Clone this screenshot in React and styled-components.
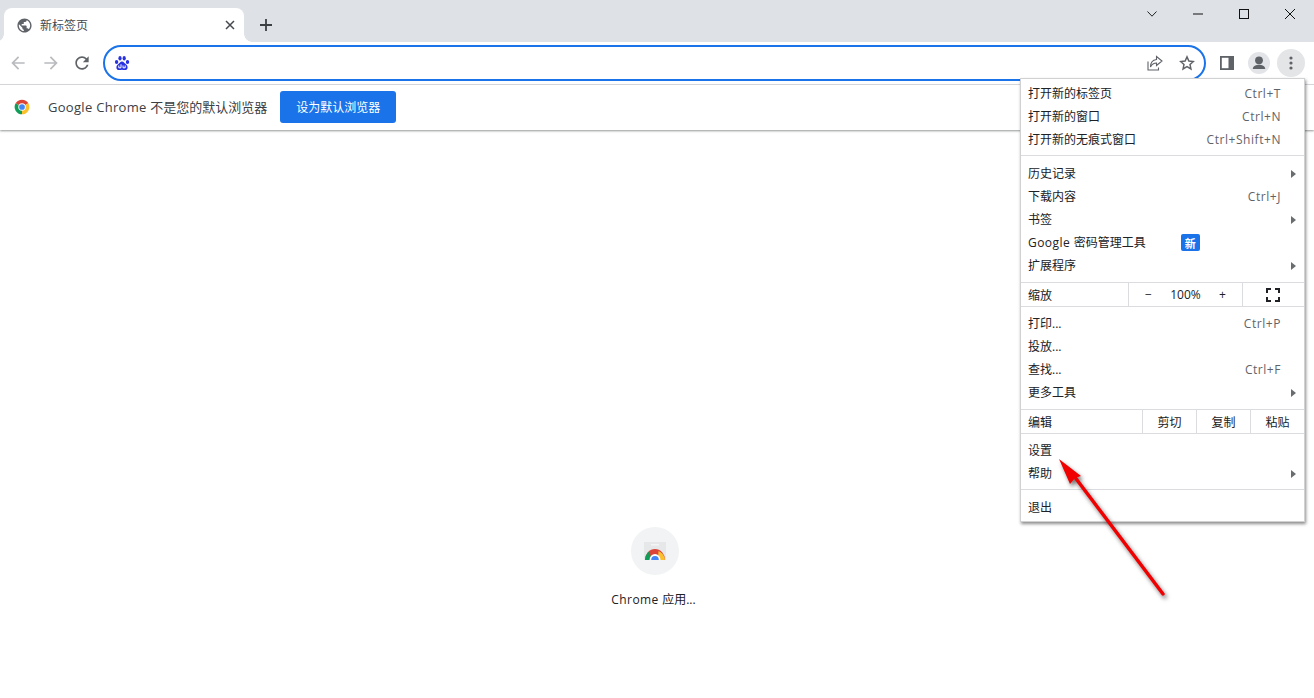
import React from 'react';
import styled, { createGlobalStyle } from 'styled-components';

const GlobalStyle = createGlobalStyle`
  html, body {
    margin: 0;
    padding: 0;
    background: #fff;
    overflow: hidden;
  }
  * { box-sizing: border-box; }
  body {
    font-family: "Open Sans", "Noto Sans CJK SC", sans-serif;
    font-size: 12px;
    color: #202124;
  }
`;

const Page = styled.div`
  position: relative;
  width: 100%;
  height: 100vh;
  display: flex;
  flex-direction: column;
  overflow: hidden;
`;

const TabStrip = styled.div`
  height: 42px;
  background: #dee1e6;
  display: flex;
  align-items: flex-end;
  padding-left: 4px;
`;

const Tab = styled.div`
  position: relative;
  width: 240px;
  height: 34px;
  background: #fff;
  border-radius: 8px 8px 0 0;
  display: flex;
  align-items: center;
  padding: 0 9px 0 12px;
  gap: 7px;
  &::before, &::after {
    content: '';
    position: absolute;
    bottom: 0;
    width: 8px;
    height: 8px;
  }
  &::before {
    left: -8px;
    background: radial-gradient(circle at 0 0, #dee1e6 7.5px, #fff 8px);
  }
  &::after {
    right: -8px;
    background: radial-gradient(circle at 100% 0, #dee1e6 7.5px, #fff 8px);
  }
`;

const TabTitle = styled.span`
  flex: 1;
  color: #45494e;
  font-size: 12px;
`;

const NewTab = styled.div`
  width: 28px;
  height: 28px;
  margin: 0 0 3px 8px;
  display: flex;
  align-items: center;
  justify-content: center;
`;

const WindowControls = styled.div`
  margin-left: auto;
  align-self: flex-start;
  display: flex;
  padding-right: 1px;
`;

const WindowButton = styled.div`
  width: 46px;
  height: 28px;
  display: flex;
  align-items: center;
  justify-content: center;
`;

const Toolbar = styled.div`
  height: 43px;
  background: #fff;
  border-bottom: 1px solid #dadce0;
  display: flex;
  align-items: center;
  padding: 0 9px 0 4px;
`;

const NavButton = styled.div`
  width: ${p => p.$w || 32}px;
  height: 28px;
  display: flex;
  align-items: center;
  justify-content: center;
  flex: none;
`;

const Omnibox = styled.div`
  flex: 1;
  height: 36px;
  margin: 0 4px 0 9px;
  border: 2px solid #1a73e8;
  border-radius: 18px;
  display: flex;
  align-items: center;
  padding: 0 3px 0 9px;
`;

const OmniSpacer = styled.div`
  flex: 1;
`;

const RoundButton = styled.div`
  width: 28px;
  height: 28px;
  margin-left: ${p => p.$gap || 4}px;
  border-radius: 50%;
  background: ${p => (p.$active ? '#e4e5e7' : 'transparent')};
  display: flex;
  align-items: center;
  justify-content: center;
  flex: none;
`;

const InfoBar = styled.div`
  height: 45px;
  background: #fff;
  display: flex;
  align-items: center;
  padding: 0 0 1px 14px;
  box-shadow: 0 1px 2px rgba(60, 64, 67, 0.55);
  position: relative;
`;

const InfoText = styled.span`
  margin: 0 0 2px 18px;
  font-size: 13px;
  color: #3c4043;
`;

const Latin = styled.span`
  letter-spacing: ${p => p.$spacing}px;
`;

const InfoButton = styled.div`
  margin-left: 13px;
  width: 116px;
  height: 32px;
  border-radius: 3px;
  background: #1a73e8;
  color: #fff;
  font-size: 12px;
  display: flex;
  align-items: center;
  justify-content: center;
`;

const Content = styled.div`
  flex: 1;
  display: flex;
  flex-direction: column;
  align-items: center;
  padding-top: 397px;
`;

const Shortcut = styled.div`
  width: 112px;
  margin-left: -4px;
  display: flex;
  flex-direction: column;
  align-items: center;
  gap: 15px;
`;

const ShortcutIcon = styled.div`
  width: 48px;
  height: 48px;
  border-radius: 50%;
  background: #f1f3f4;
  display: flex;
  align-items: center;
  justify-content: center;
`;

const ShortcutLabel = styled.div`
  font-size: 12px;
  color: #202124;
  margin-left: -3px;
`;

const Menu = styled.div`
  position: absolute;
  left: 1020px;
  top: 78px;
  width: 285px;
  height: 444px;
  background: #fff;
  border: 1px solid #d0d1d3;
  padding-top: 3px;
  box-shadow: 1px 2px 3px rgba(0, 0, 0, 0.45);
`;

const Row = styled.div`
  height: 23px;
  display: flex;
  align-items: center;
  padding: 0 8px 0 7px;
`;

const RowLabel = styled.span`
  margin-bottom: 2px;
`;

const Keys = styled.span`
  margin-left: auto;
  padding-right: 15px;
  color: #5f6368;
  font-size: 12px;
  letter-spacing: 0.55px;
`;

const Caret = styled.span`
  margin-left: auto;
  width: 0;
  height: 0;
  border-left: 5px solid #6a6d70;
  border-top: 4px solid transparent;
  border-bottom: 4px solid transparent;
`;

const Badge = styled.span`
  margin-left: 35px;
  width: 19px;
  height: 17px;
  border-radius: 2px;
  background: #1a73e8;
  color: #fff;
  font-size: 11px;
  font-weight: 700;
  display: flex;
  align-items: center;
  justify-content: center;
`;

const Sep = styled.div`
  height: 1px;
  background: #dadce0;
  margin: ${p => p.$above ?? 0}px 0 ${p => p.$below ?? 0}px;
`;

const CellRow = styled.div`
  height: 23px;
  display: flex;
  align-items: stretch;
`;

const CellLabel = styled.div`
  width: ${p => p.$w}px;
  padding-left: 7px;
  display: flex;
  align-items: center;
`;

const Cell = styled.div`
  width: ${p => p.$w}px;
  border-left: 1px solid #dadce0;
  display: flex;
  align-items: center;
  justify-content: ${p => p.$spread ? 'space-between' : 'center'};
  padding: ${p => p.$spread ? '0 16px' : '0'};
`;

const FullscreenCell = styled(Cell)`
  padding-right: 2px;
`;

const ArrowOverlay = styled.svg`
  position: absolute;
  left: 0;
  top: 0;
  width: 100%;
  height: 100%;
  pointer-events: none;
  filter: drop-shadow(2px 3px 2px rgba(0, 0, 0, 0.55));
`;

const Icon = ({ d, fill = '#5f6368', size = 20 }) => (
  <svg width={size} height={size} viewBox="0 0 24 24"><path d={d} fill={fill} /></svg>
);

const ChromeLogo = ({ size = 16 }) => (
  <svg width={size} height={size} viewBox="0 0 24 24">
    <path d="M12 12 L2.47 6.5 A11 11 0 0 1 21.53 6.5 Z" fill="#db4437" />
    <path d="M12 12 L21.53 6.5 A11 11 0 0 1 12 23 Z" fill="#fbc02d" />
    <path d="M12 12 L12 23 A11 11 0 0 1 2.47 6.5 Z" fill="#0f9d58" />
    <circle cx="12" cy="12" r="5.6" fill="#fff" />
    <circle cx="12" cy="12" r="4.3" fill="#4285f4" />
  </svg>
);

const Paw = () => (
  <svg width="16" height="16" viewBox="0 0 16 16">
    <g fill="#2932e1">
      <ellipse cx="2.6" cy="7" rx="1.7" ry="2.1" />
      <ellipse cx="6" cy="3.2" rx="1.6" ry="2.2" />
      <ellipse cx="10.2" cy="3.2" rx="1.6" ry="2.2" />
      <ellipse cx="13.5" cy="7" rx="1.7" ry="2.1" />
      <path d="M8 6.4c1.8 0 2.4 1.6 3.6 2.7 1.3 1.1 2 2 2 3.3 0 1.8-1.5 2.9-3 2.7-1-.1-1.7-.4-2.6-.4s-1.6.3-2.6.4c-1.6.2-3-.9-3-2.7 0-1.3.7-2.2 2-3.3C5.600 8 6.200 6.400 8 6.400z" />
    </g>
    <path d="M4.800 10.500v2.300h2.200v-3.500M9 10.500v2.300h2.200v-2.300" fill="none" stroke="#fff" strokeWidth="1" />
  </svg>
);

const back = 'M20 11H7.830l5.590-5.590L12 4l-8 8 8 8 1.410-1.410L7.830 13H20v-2z';
const forward = 'M4 11h12.170l-5.590-5.590L12 4l8 8-8 8-1.410-1.410L16.170 13H4v-2z';
const reload = 'M17.650 6.350C16.200 4.900 14.210 4 12 4c-4.420 0-7.990 3.580-7.990 8s3.570 8 7.990 8c3.730 0 6.840-2.550 7.730-6h-2.080c-.82 2.330-3.040 4-5.650 4-3.310 0-6-2.690-6-6s2.690-6 6-6c1.660 0 3.140.69 4.220 1.780L13 11h7V4l-2.350 2.350z';
const globe = 'M12 2C6.480 2 2 6.480 2 12s4.480 10 10 10 10-4.480 10-10S17.520 2 12 2zm-1 17.930c-3.950-.49-7-3.850-7-7.930 0-.62.08-1.210.21-1.790L9 15v1c0 1.100.9 2 2 2v1.930zm6.900-2.540c-.26-.81-1-1.390-1.900-1.390h-1v-3c0-.55-.45-1-1-1H8v-2h2c.55 0 1-.45 1-1V7h2c1.100 0 2-.9 2-2v-.41c2.930 1.190 5 4.060 5 7.410 0 2.080-.8 3.970-2.100 5.390z';

const group1 = [
  ['打开新的标签页', 'Ctrl+T'],
  ['打开新的窗口', 'Ctrl+N'],
  ['打开新的无痕式窗口', 'Ctrl+Shift+N'],
];

const group3 = [
  ['打印...', 'Ctrl+P'],
  ['投放...'],
  ['查找...', 'Ctrl+F'],
  ['更多工具', null, true],
];

const MenuRow = ({ label, keys, sub, children }) => (
  <Row>
    <RowLabel>{label}</RowLabel>
    {children}
    {keys && <Keys>{keys}</Keys>}
    {sub && <Caret />}
  </Row>
);

const App = () => {
  return (
    <Page>
      <GlobalStyle />
      <TabStrip>
        <Tab>
          <Icon d={globe} size={17} />
          <TabTitle>新标签页</TabTitle>
          <svg width="10" height="10" viewBox="0 0 10 10">
            <path d="M1 1l8 8M9 1l-8 8" stroke="#45494e" strokeWidth="1.500" />
          </svg>
        </Tab>
        <NewTab>
          <svg width="12" height="12" viewBox="0 0 12 12">
            <path d="M6 0v12M0 6h12" stroke="#3c4043" strokeWidth="1.800" />
          </svg>
        </NewTab>
        <WindowControls>
          <WindowButton>
            <svg width="10" height="6" viewBox="0 0 10 6">
              <path d="M.5.5L5 5.200 9.500.5" fill="none" stroke="#222" strokeWidth="1" />
            </svg>
          </WindowButton>
          <WindowButton>
            <svg width="10" height="2" viewBox="0 0 10 2"><path d="M0 1h10" stroke="#111" strokeWidth="1" /></svg>
          </WindowButton>
          <WindowButton>
            <svg width="10" height="10" viewBox="0 0 10 10"><rect x=".5" y=".5" width="9" height="9" fill="none" stroke="#111" strokeWidth="1" /></svg>
          </WindowButton>
          <WindowButton>
            <svg width="10" height="10" viewBox="0 0 10 10"><path d="M0 0l10 10M10 0L0 10" stroke="#111" strokeWidth="1" /></svg>
          </WindowButton>
        </WindowControls>
      </TabStrip>

      <Toolbar>
        <NavButton $w={28}><Icon d={back} fill="#b9bbbe" /></NavButton>
        <NavButton $w={38}><Icon d={forward} fill="#b9bbbe" /></NavButton>
        <NavButton $w={24}><Icon d={reload} /></NavButton>
        <Omnibox>
          <Paw />
          <OmniSpacer />
          <RoundButton>
            <svg width="16" height="16" viewBox="0 0 16 16" fill="none" stroke="#5f6368" strokeWidth="1.100">
              <path d="M1 6.500V15h10.500v-2.500" />
              <path d="M9.500 1.500L15 6l-5.500 4.500V8C7 8 5 9 3.500 12c0-4 2-7 6-7.500z" />
            </svg>
          </RoundButton>
          <RoundButton>
            <svg width="16" height="16" viewBox="0 0 24 24" fill="none" stroke="#5f6368" strokeWidth="2.200">
              <path d="M12 2.800l2.800 6.200 6.700.7-5 4.500 1.400 6.700L12 17.500l-5.900 3.400 1.400-6.700-5-4.500 6.700-.7z" />
            </svg>
          </RoundButton>
        </Omnibox>
        <RoundButton $gap={3}>
          <svg width="14" height="14" viewBox="0 0 14 14">
            <path d="M0 0h14v14H0z" fill="#5f6368" />
            <path d="M1.800 1.800h6.700v10.400H1.800z" fill="#fff" />
          </svg>
        </RoundButton>
        <RoundButton $gap={4}>
          <svg width="22" height="22" viewBox="0 0 22 22">
            <circle cx="11" cy="11" r="11" fill="#e2e4e8" />
            <circle cx="11" cy="8.300" r="3.900" fill="#5f6368" />
            <path d="M4.800 17c0-3 3.600-4.300 6.200-4.300s6.200 1.300 6.200 4.300z" fill="#5f6368" />
          </svg>
        </RoundButton>
        <RoundButton $active $gap={4}>
          <svg width="4" height="14" viewBox="0 0 4 14" fill="#5f6368">
            <circle cx="2" cy="2" r="1.600" />
            <circle cx="2" cy="7" r="1.600" />
            <circle cx="2" cy="12" r="1.600" />
          </svg>
        </RoundButton>
      </Toolbar>

      <InfoBar>
        <ChromeLogo />
        <InfoText><Latin $spacing={0.3}>Google Chrome </Latin>不是您的默认浏览器</InfoText>
        <InfoButton>设为默认浏览器</InfoButton>
      </InfoBar>

      <Content>
        <Shortcut>
          <ShortcutIcon>
            <svg width="24" height="24" viewBox="0 0 24 24">
              <path d="M1 3h22v18H1z" fill="#e6e7e9" />
              <path d="M8 5h8v1.500H8z" fill="#f4f5f6" />
              <path d="M2 21 A10 11 0 0 1 22 21 Z" fill="#db4437" />
              <path d="M2 21 A10 11 0 0 1 6 12.500 L9 21 Z" fill="#0f9d58" />
              <path d="M22 21 A10 11 0 0 0 15.500 12 L15 21 Z" fill="#fbc02d" />
              <path d="M6.500 21 A5.500 6 0 0 1 17.500 21 Z" fill="#fff" />
              <path d="M8.200 21 A3.800 4 0 0 1 15.800 21 Z" fill="#4285f4" />
            </svg>
          </ShortcutIcon>
          <ShortcutLabel><Latin $spacing={0.4}>Chrome </Latin>应用...</ShortcutLabel>
        </Shortcut>
      </Content>

      <Menu>
        {group1.map(([label, keys]) => <MenuRow key={label} label={label} keys={keys} />)}
        <Sep $above={4} $below={6} />
        <MenuRow label="历史记录" sub />
        <MenuRow label="下载内容" keys="Ctrl+J" />
        <MenuRow label="书签" sub />
        <MenuRow label={<><Latin $spacing={0.45}>Google </Latin>密码管理工具</>}><Badge>新</Badge></MenuRow>
        <MenuRow label="扩展程序" sub />
        <Sep $above={5} />
        <CellRow>
          <CellLabel $w={107}>缩放</CellLabel>
          <Cell $w={114} $spread>
            <span>−</span>
            <span>100%</span>
            <span>+</span>
          </Cell>
          <FullscreenCell $w={62}>
            <svg width="14" height="14" viewBox="0 0 14 14" fill="none" stroke="#202124" strokeWidth="2">
              <path d="M1 5V1h4M9 1h4v4M13 9v4H9M5 13H1V9" />
            </svg>
          </FullscreenCell>
        </CellRow>
        <Sep $below={5} />
        {group3.map(([label, keys, sub]) => <MenuRow key={label} label={label} keys={keys} sub={sub} />)}
        <Sep $above={5} />
        <CellRow>
          <CellLabel $w={121}>编辑</CellLabel>
          <Cell $w={54}>剪切</Cell>
          <Cell $w={54}>复制</Cell>
          <Cell $w={54}>粘贴</Cell>
        </CellRow>
        <Sep $below={5} />
        <MenuRow label="设置" />
        <MenuRow label="帮助" sub />
        <Sep $above={4} $below={6} />
        <MenuRow label="退出" />
      </Menu>

      <ArrowOverlay viewBox="0 0 1314 698">
        <path d="M1163 594L1075.500 478" stroke="#f00000" strokeWidth="3.400" strokeLinecap="round" fill="none" />
        <path d="M1059 459L1081 476 1075 478 1070 484z" fill="#f00000" />
      </ArrowOverlay>
    </Page>
  );
};

export default App;
